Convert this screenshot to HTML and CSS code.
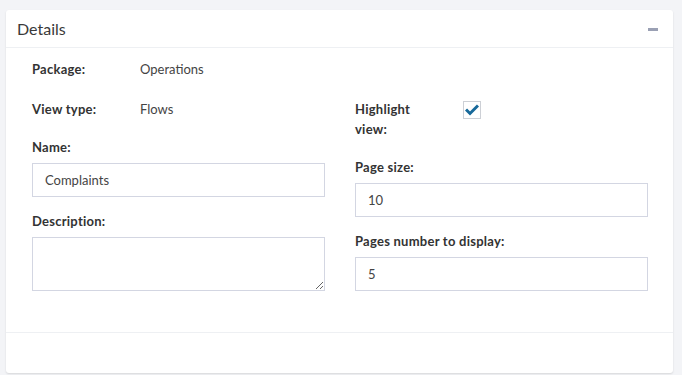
FILE: index.html
```html
<!DOCTYPE html>
<html lang="en">
<head>
    <meta charset="UTF-8">
    <title>Details</title>
    <link rel="stylesheet" href="styles.css">
</head>
<body>
    <div class="panel">
        <div class="panel-head">
            <span class="panel-title">Details</span>
            <span class="collapse-btn"></span>
        </div>
        <div class="panel-body">
            <div class="col">
                <div class="info-row">
                    <span class="lbl">Package:</span>
                    <span class="val">Operations</span>
                </div>
                <div class="info-row">
                    <span class="lbl">View type:</span>
                    <span class="val">Flows</span>
                </div>
                <div class="field">
                    <label class="lbl">Name:</label>
                    <input type="text" class="inp" value="Complaints">
                </div>
                <div class="field">
                    <label class="lbl">Description:</label>
                    <textarea class="inp area"></textarea>
                </div>
            </div>
            <div class="col">
                <div class="check-row">
                    <span class="lbl hl">Highlight view:</span>
                    <span class="check">
                        <svg width="14" height="12" viewBox="0 0 14 12"><path d="M1 5.5 L5 9.5 L13 1.5" fill="none" stroke="#17699a" stroke-width="3"/></svg>
                    </span>
                </div>
                <div class="field">
                    <label class="lbl">Page size:</label>
                    <input type="text" class="inp" value="10">
                </div>
                <div class="field">
                    <label class="lbl">Pages number to display:</label>
                    <input type="text" class="inp" value="5">
                </div>
            </div>
        </div>
        <div class="panel-foot"></div>
    </div>
</body>
</html>
```

FILE: styles.css
```css
body {
    margin: 0;
    padding: 10px 9px 3px 6px;
    background: #f3f4f7;
    font-family: Lato, "Open Sans", sans-serif;
    font-size: 13px;
    color: #444;
}
.panel {
    background: white;
    border-radius: 3px;
    box-shadow: 0 1px 2px rgba(0,0,0,0.12);
}
.panel-head {
    height: 37px;
    border-bottom: 1px solid #eef0f3;
    display: flex;
    align-items: center;
    justify-content: space-between;
    padding: 0 15px 0 11px;
}
.panel-title {
    font-size: 16px;
    color: #3a3a3a;
}
.collapse-btn {
    width: 10px;
    height: 3px;
    background: #9aa0b4;
    margin-top: 1px;
}
.panel-body {
    display: grid;
    grid-template-columns: 293px 293px;
    column-gap: 30px;
    padding: 11px 0 25px 26px;
    border-bottom: 1px solid #eef0f3;
}
.lbl {
    font-weight: bold;
    color: #333;
    display: block;
    letter-spacing: 0.25px;
}
.info-row {
    display: flex;
    height: 19px;
    align-items: center;
    margin-bottom: 21px;
}
.info-row .lbl { width: 108px; }
.val { color: #444; }
.field { margin-bottom: 16px; }
.field .lbl { margin-bottom: 8px; }
.inp {
    display: block;
    width: 100%;
    box-sizing: border-box;
    height: 34px;
    border: 1px solid #d3d6e2;
    padding: 0 12px;
    font-family: inherit;
    font-size: 13px;
    color: #444;
    margin: 0;
}
.area {
    height: 54px;
    resize: vertical;
}
.check-row {
    display: flex;
    align-items: flex-start;
    margin-top: 40px;
    margin-bottom: 20px;
}
.hl {
    width: 62px;
    line-height: 20px;
    margin-right: 46px;
}
.check {
    width: 16px;
    height: 16px;
    border: 1px solid #cdd0d6;
    display: flex;
    align-items: center;
    justify-content: center;
    margin-top: 2px;
}
.panel-foot { height: 40px; }
```
